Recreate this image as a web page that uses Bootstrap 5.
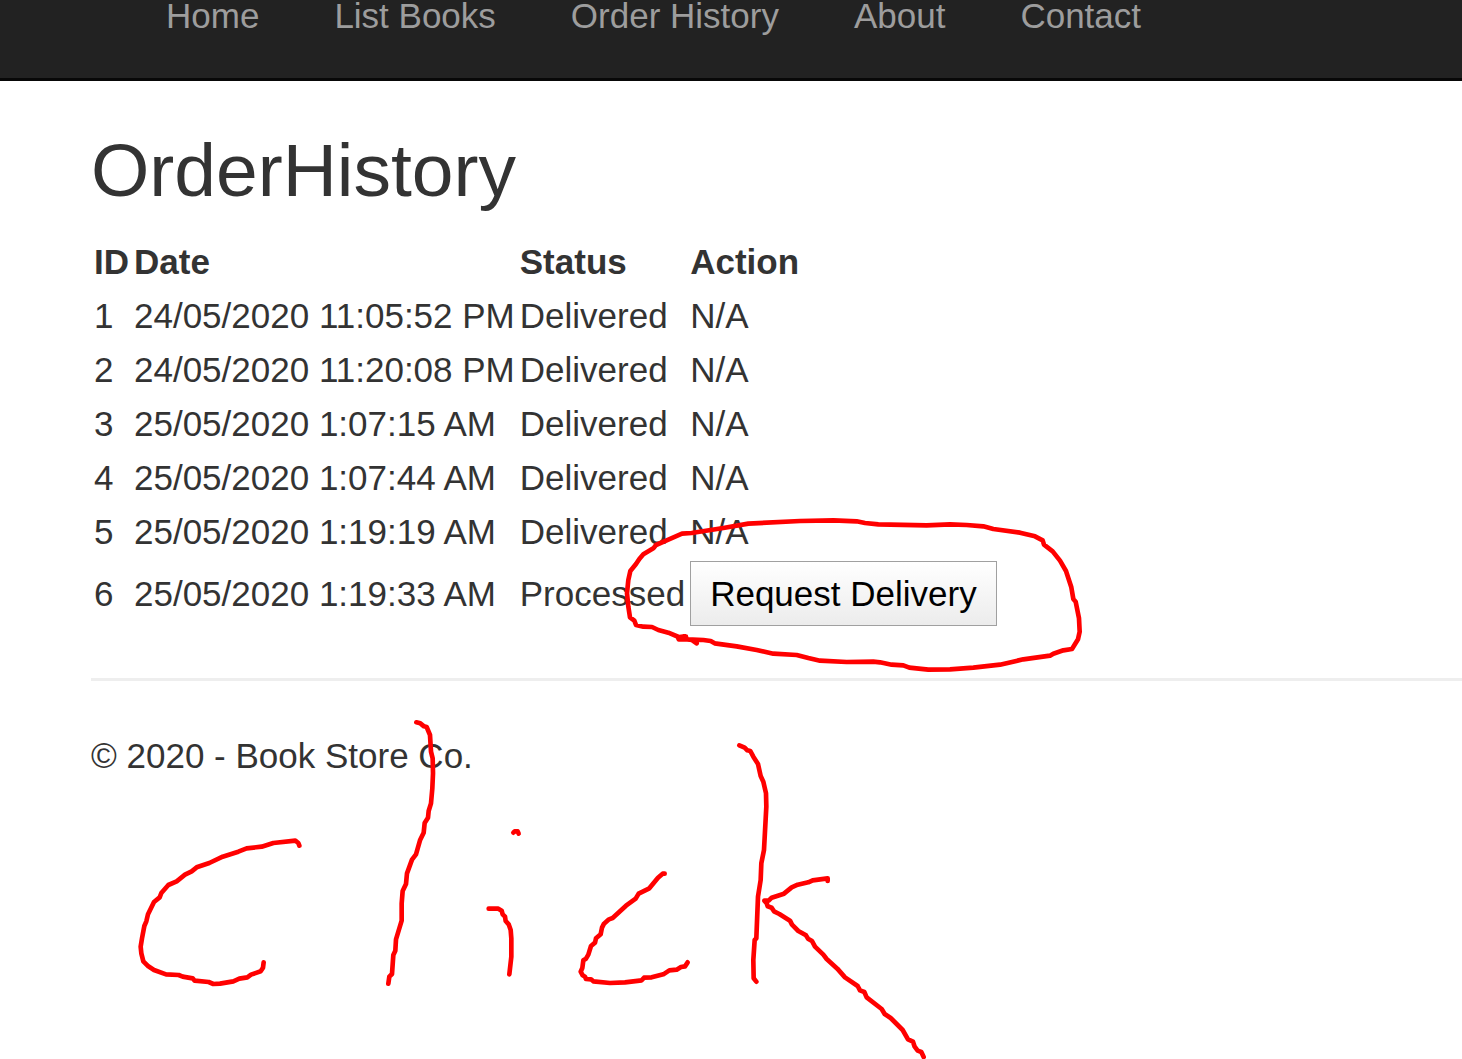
<!DOCTYPE html>
<html lang="en">
<head>
<meta charset="utf-8">
<meta name="viewport" content="width=device-width, initial-scale=1">
<title>OrderHistory</title>
<link href="https://cdn.jsdelivr.net/npm/bootstrap@5.3.0/dist/css/bootstrap.min.css" rel="stylesheet">
<style>
  body {
    font-family: "Liberation Sans", Arial, sans-serif;
    font-size: 35px;
    line-height: 50px;
    color: #333;
    background: #fff;
  }
  .site-nav {
    background: #222;
    border-bottom: 3px solid #080808;
    padding: 0 0 46px 166px;
  }
  .site-nav .navbar-nav { gap: 0 75px; }
  .site-nav .nav-link {
    color: #9d9d9d;
    padding: 0;
    line-height: 32px;
  }
  .page-body { padding: 48px 0 0 91px; }
  .page-title {
    font-size: 75px;
    line-height: 82px;
    margin-bottom: 24px;
  }
  .order-table th, .order-table td { padding: 2px 2px 2px 3px; vertical-align: middle; }
  .request-btn {
    display: block;
    height: 65px;
    padding: 0 19px;
    border: 1px solid #a0a0a0;
    color: #000;
    line-height: 50px;
    background: linear-gradient(#fff, #ececec);
  }
  .page-rule { border-top: 3px solid #eee; opacity: 1; margin: 50px 0; }
  .ink { pointer-events: none; }
</style>
<script src="https://cdn.jsdelivr.net/npm/bootstrap@5.3.0/dist/js/bootstrap.bundle.min.js"></script>
</head>
<body class="position-relative min-vh-100">
  <nav class="navbar site-nav">
    <ul class="navbar-nav flex-row flex-wrap">
      <li class="nav-item"><a class="nav-link" href="#">Home</a></li>
      <li class="nav-item"><a class="nav-link" href="#">List Books</a></li>
      <li class="nav-item"><a class="nav-link" href="#">Order History</a></li>
      <li class="nav-item"><a class="nav-link" href="#">About</a></li>
      <li class="nav-item"><a class="nav-link" href="#">Contact</a></li>
    </ul>
  </nav>

  <div class="page-body">
    <main>
      <h2 class="page-title fw-normal">OrderHistory</h2>
      <table class="order-table text-nowrap">
        <thead>
          <tr><th scope="col">ID</th><th scope="col">Date</th><th scope="col">Status</th><th scope="col">Action</th></tr>
        </thead>
        <tbody>
          <tr><td>1</td><td>24/05/2020 11:05:52 PM</td><td>Delivered</td><td>N/A</td></tr>
          <tr><td>2</td><td>24/05/2020 11:20:08 PM</td><td>Delivered</td><td>N/A</td></tr>
          <tr><td>3</td><td>25/05/2020 1:07:15 AM</td><td>Delivered</td><td>N/A</td></tr>
          <tr><td>4</td><td>25/05/2020 1:07:44 AM</td><td>Delivered</td><td>N/A</td></tr>
          <tr><td>5</td><td>25/05/2020 1:19:19 AM</td><td>Delivered</td><td>N/A</td></tr>
          <tr><td>6</td><td>25/05/2020 1:19:33 AM</td><td>Processed</td><td><button type="button" class="request-btn">Request Delivery</button></td></tr>
        </tbody>
      </table>
    </main>
    <hr class="page-rule">
    <footer><p class="mb-0">© 2020 - Book Store Co.</p></footer>
  </div>

  <!-- Freehand pen marks over the page -->
  <svg class="ink position-absolute top-0 start-0" width="1100" height="1059" viewBox="0 0 1100 1059" fill="none" stroke="#f00" stroke-width="14" stroke-linecap="round" stroke-linejoin="round" aria-hidden="true">
    <g transform="translate(600 500) scale(.33333)">
      <path d="M290 430L276 420L262 418L236 418L234 412L254 409L262 418L310 420L332 423L344 430L410 439L470 450L520 461L590 465L625 474L660 482L740 486L820 485L840 487L875 494L910 496L928 503L985 509L1050 508L1120 503L1200 494L1270 478L1350 467L1360 461L1390 451L1416 447L1434 418L1439 395L1437 355L1427 305L1420 297L1414 262L1398 213L1380 182L1358 154L1332 134L1328 121L1305 109L1260 98L1180 87L1150 79L1100 75L1050 73L980 76L835 73L795 69L770 64L700 61L600 63L445 71L370 84L275 99L246 101L200 121L168 135L160 145L130 163L118 177L108 192L91 213L85 240L81 280L85 320L90 352L103 362L108 375L130 380L156 381L175 390L205 398L236 411L258 410"/>
    </g>
    <g transform="translate(120 700) scale(.33333)">
      <path d="M538 437L535 429L526 422L460 429L425 440L380 445L355 455L308 470L268 489L230 502L215 514L195 524L170 544L145 555L124 579L119 592L102 606L84 643L79 664L73 678L66 715L62 740L64 760L70 784L85 799L102 810L138 823L176 825L188 830L218 835L224 842L266 846L280 852L300 851L340 844L358 836L382 832L393 824L422 814L429 803L431 787"/>
      <path d="M889 67L901 70L912 79L920 81L930 105L933 155L938 175L939 220L937 265L933 310L926 333L924 353L914 369L911 398L900 421L888 463L876 479L861 520L858 552L848 573L845 610L845 662L828 718L826 752L820 765L816 822L808 830L805 851"/>
    </g>
    <g transform="translate(470 720) scale(.33333)">
      <path d="M130 338L134 334L143 334L146 341"/>
      <path d="M56 566L85 566L95 572L98 583L105 590L107 603L116 613L122 630L124 655L124 710L118 763"/>
      <path d="M584 461L578 461L564 473L538 505L506 521L497 536L468 557L428 594L417 598L402 611L396 623L392 643L378 655L375 668L363 678L355 704L348 716L340 721L337 744L332 755L338 766L345 770L348 777L363 778L370 784L420 789L465 787L515 781L522 773L545 772L580 763L598 751L620 749L633 741L645 739L653 727"/>
      <path d="M808 76L824 83L832 91L841 93L850 110L864 132L872 168L880 185L888 220L889 260L882 390L874 430L872 480L864 530L859 655L854 660L850 720L851 775L859 785"/>
      <path d="M1073 483L1073 475L1028 481L1015 487L983 494L965 502L942 521L905 533L896 542L883 542L890 550L893 559L905 563L912 574L928 582L960 602L966 614L985 633L1008 646L1014 656L1026 663L1035 680L1060 704L1070 717L1102 746L1125 772L1163 798L1170 811L1183 816L1190 832L1235 867L1244 882L1262 894L1298 930L1314 958L1329 965L1334 980L1343 992L1354 996L1361 1011"/>
    </g>
  </svg>
</body>
</html>
